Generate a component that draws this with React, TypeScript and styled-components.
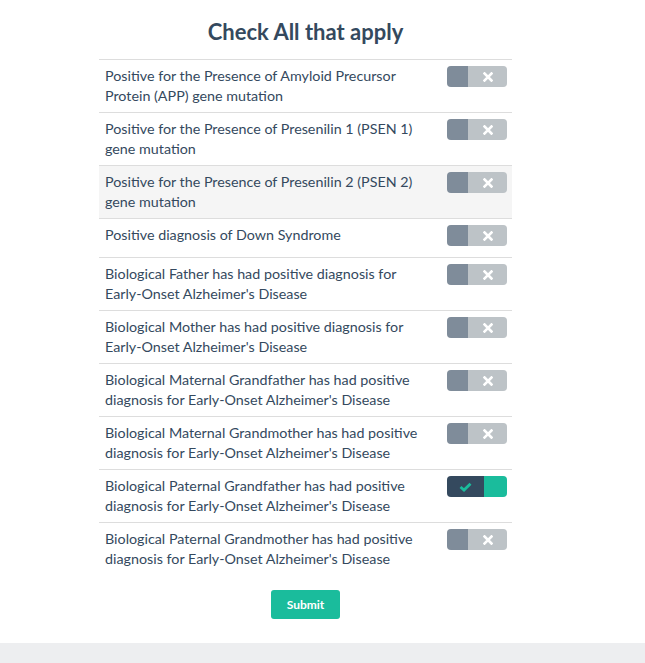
import React, { useState } from "react";
import styled, { createGlobalStyle } from "styled-components";

const Global = createGlobalStyle`
  html, body { margin: 0; padding: 0; background: #ffffff; }
  body { font-family: Lato, "Open Sans", sans-serif; color: #34495e; }
`;

const Page = styled.div`
  display: flex;
  flex-direction: column;
  min-height: 663px;
`;

const Main = styled.main`
  width: 611px;
  display: flex;
  flex-direction: column;
  align-items: center;
  padding-top: 19px;
  flex: 1;
`;

const Title = styled.h3`
  margin: 0 0 14px;
  font-family: Lato, sans-serif;
  font-weight: 700;
  font-size: 22px;
  line-height: 26px;
  color: #34495e;
`;

const List = styled.div`
  width: 413px;
  display: flex;
  flex-direction: column;
`;

const Row = styled.div<{ $hover?: boolean }>`
  display: flex;
  align-items: flex-start;
  border-top: 1px solid #dddddd;
  background: ${(p) => (p.$hover ? "#f5f5f5" : "transparent")};
`;

const Label = styled.div`
  width: 340px;
  box-sizing: border-box;
  padding: 6px 8px 6px 6px;
  font-size: 14.3px;
  line-height: 20px;
  color: #34495e;
`;

const SwitchCell = styled.div`
  padding: 6px 5px 5px 8px;
`;

const Switch = styled.button<{ $on: boolean }>`
  display: flex;
  width: 60px;
  height: 21px;
  padding: 0;
  margin: 0 0 6px;
  border: none;
  border-radius: 4px;
  overflow: hidden;
  cursor: pointer;
`;

const Handle = styled.span<{ $on: boolean }>`
  width: ${(p) => (p.$on ? "37px" : "21px")};
  background: ${(p) => (p.$on ? "#34495e" : "#7f8c9a")};
  display: flex;
  align-items: center;
  justify-content: center;
`;

const Track = styled.span<{ $on: boolean }>`
  flex: 1;
  background: ${(p) => (p.$on ? "#1abc9c" : "#bdc3c7")};
  display: flex;
  align-items: center;
  justify-content: center;
`;

const Actions = styled.div`
  display: flex;
  justify-content: center;
  padding-top: 15px;
`;

const Submit = styled.button`
  width: 69px;
  height: 29px;
  border: none;
  border-radius: 3px;
  background: #1abc9c;
  color: #ffffff;
  font-family: Lato, sans-serif;
  font-weight: 700;
  font-size: 12px;
  cursor: pointer;
`;

const Footer = styled.footer`
  height: 20px;
  margin-top: auto;
  background: #edeef0;
`;

const Cross = () => (
  <svg width="10" height="10" viewBox="0 0 10 10">
    <path d="M1.5 1.5 L8.5 8.5 M8.5 1.5 L1.5 8.5" stroke="#ffffff" strokeWidth="2.6" strokeLinecap="square" />
  </svg>
);

const Check = () => (
  <svg width="13" height="10" viewBox="0 0 13 10">
    <path d="M1.5 5 L5 8 L11.5 1.8" stroke="#1abc9c" strokeWidth="2.8" fill="none" />
  </svg>
);

const items = [
  "Positive for the Presence of Amyloid Precursor Protein (APP) gene mutation",
  "Positive for the Presence of Presenilin 1 (PSEN 1) gene mutation",
  "Positive for the Presence of Presenilin 2 (PSEN 2) gene mutation",
  "Positive diagnosis of Down Syndrome",
  "Biological Father has had positive diagnosis for Early-Onset Alzheimer's Disease",
  "Biological Mother has had positive diagnosis for Early-Onset Alzheimer's Disease",
  "Biological Maternal Grandfather has had positive diagnosis for Early-Onset Alzheimer's Disease",
  "Biological Maternal Grandmother has had positive diagnosis for Early-Onset Alzheimer's Disease",
  "Biological Paternal Grandfather has had positive diagnosis for Early-Onset Alzheimer's Disease",
  "Biological Paternal Grandmother has had positive diagnosis for Early-Onset Alzheimer's Disease",
];

export default function App() {
  const [vals, setVals] = useState<boolean[]>(items.map((_, i) => i === 8));
  const toggle = (i: number) => setVals((v) => v.map((x, j) => (j === i ? !x : x)));
  return (
    <Page>
      <Global />
      <Main>
        <Title>Check All that apply</Title>
        <List>
          {items.map((t, i) => (
            <Row key={i} $hover={i === 2}>
              <Label>{t}</Label>
              <SwitchCell>
                <Switch $on={vals[i]} onClick={() => toggle(i)} aria-pressed={vals[i]}>
                  <Handle $on={vals[i]}>{vals[i] ? <Check /> : null}</Handle>
                  <Track $on={vals[i]}>{vals[i] ? null : <Cross />}</Track>
                </Switch>
              </SwitchCell>
            </Row>
          ))}
        </List>
        <Actions>
          <Submit>Submit</Submit>
        </Actions>
      </Main>
      <Footer />
    </Page>
  );
}
